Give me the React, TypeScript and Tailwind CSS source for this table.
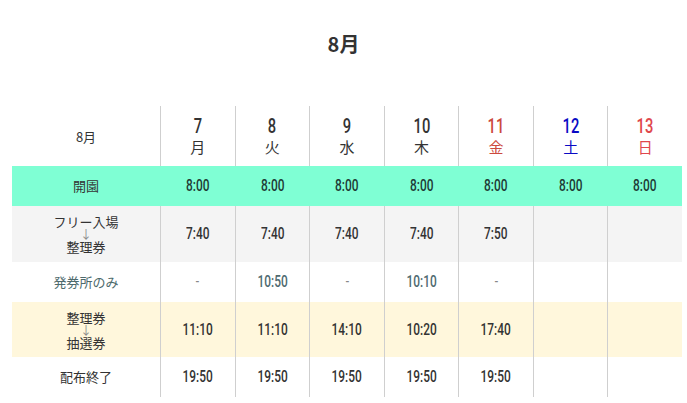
const NUM = "inline-block font-['Roboto',sans-serif] font-medium";

const DAYS = [
  { d: "7", w: "月", color: "text-[#333]" },
  { d: "8", w: "火", color: "text-[#333]" },
  { d: "9", w: "水", color: "text-[#333]" },
  { d: "10", w: "木", color: "text-[#333]" },
  { d: "11", w: "金", color: "text-[#cc4a3d]" },
  { d: "12", w: "土", color: "text-[#0a0ac4]" },
  { d: "13", w: "日", color: "text-[#e0474c]" },
];

type Row = {
  label: string[];
  times: string[];
  bg: string;
  h: string;
  mint?: boolean;
  muted?: boolean;
};

const ROWS: Row[] = [
  { label: ["開園"], times: ["8:00", "8:00", "8:00", "8:00", "8:00", "8:00", "8:00"], bg: "bg-[#7fffd4]", h: "h-[40px]", mint: true },
  { label: ["フリー入場", "整理券"], times: ["7:40", "7:40", "7:40", "7:40", "7:50", "", ""], bg: "bg-[#f4f4f4]", h: "h-[56px]" },
  { label: ["発券所のみ"], times: ["-", "10:50", "-", "10:10", "-", "", ""], bg: "bg-white", h: "h-[40px]", muted: true },
  { label: ["整理券", "抽選券"], times: ["11:10", "11:10", "14:10", "10:20", "17:40", "", ""], bg: "bg-[#fff7dc]", h: "h-[55px]" },
  { label: ["配布終了"], times: ["19:50", "19:50", "19:50", "19:50", "19:50", "", ""], bg: "bg-white", h: "h-[40px]" },
];

const GRID = "grid grid-cols-[148px_repeat(7,minmax(0,1fr))]";

function Label({ lines, muted }: { lines: string[]; muted?: boolean }) {
  const color = muted ? "text-[#4d6a6c]" : "text-[#333]";
  if (lines.length === 1) {
    return <span className={`text-[13px] ${color}`}>{lines[0]}</span>;
  }
  return (
    <div className={`flex flex-col items-center text-[13px] leading-[13px] ${color}`}>
      <span>{lines[0]}</span>
      <span className="text-[12px] leading-[12px] text-[#8a8a8a]">↓</span>
      <span>{lines[1]}</span>
    </div>
  );
}

export default function App() {
  return (
    <div className="w-[687px] h-[403px] bg-white font-['Noto_Sans_CJK_JP',sans-serif] overflow-hidden">
      <div className="h-[106px] pt-[31px] text-center">
        <h1 className="text-[20px] leading-[26px] font-bold text-[#333]">8月</h1>
      </div>

      <div className="ml-[12px] w-[670px]">
        {/* header */}
        <div className={`${GRID} h-[60px]`}>
          <div className="flex items-center justify-center pt-[2px] text-[13px] text-[#333]">8月</div>
          {DAYS.map((day) => (
            <div
              key={day.d}
              className={`flex flex-col items-center justify-center border-l border-[#cfcfcf] ${day.color}`}
            >
              <span className={`${NUM} text-[21px] leading-[21px] scale-x-[0.7]`}>{day.d}</span>
              <span className="text-[15px] leading-[20px]">{day.w}</span>
            </div>
          ))}
        </div>

        {ROWS.map((row, i) => (
          <div key={i} className={`${GRID} ${row.h} ${row.bg}`}>
            <div className="flex items-center justify-center">
              <Label lines={row.label} muted={row.muted} />
            </div>
            {row.times.map((t, j) => (
              <div
                key={j}
                className={`flex items-center justify-center border-l ${
                  row.mint ? "border-transparent" : "border-[#cfcfcf]"
                } ${
                  row.mint
                    ? "text-[#1e3a34]"
                    : t === "-"
                    ? "text-[#888]"
                    : row.muted
                    ? "text-[#4f6a70]"
                    : "text-[#333]"
                }`}
              >
                <span className={`${NUM} text-[17px] scale-x-[0.7] ${t === "-" ? "font-normal" : ""}`}>{t}</span>
              </div>
            ))}
          </div>
        ))}
      </div>
    </div>
  );
}
